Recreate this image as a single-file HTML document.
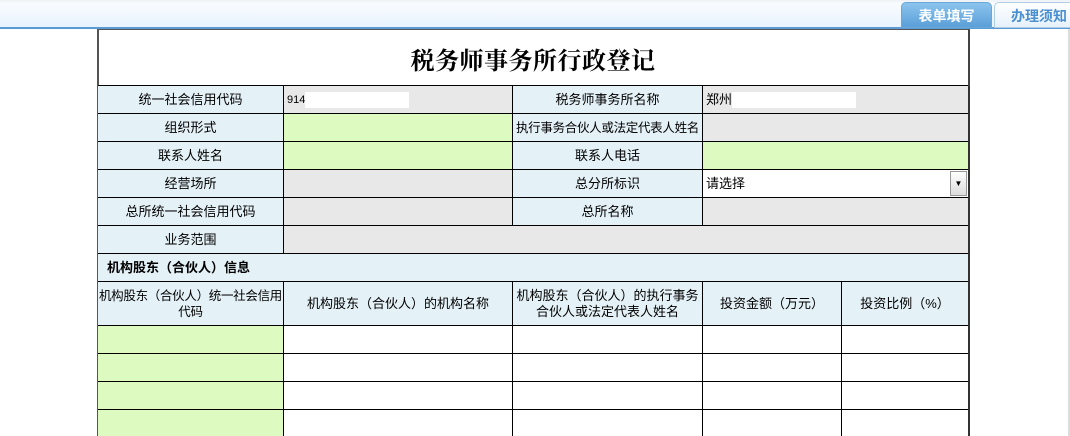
<!DOCTYPE html>
<html style="width:1070px;height:436px;overflow:hidden"><head><meta charset="utf-8"><style>
*{margin:0;padding:0;box-sizing:border-box}
body{width:1070px;height:436px;overflow:hidden;background:#fff;position:relative;font-family:"Liberation Sans","Noto Sans CJK SC","WenQuanYi Zen Hei",sans-serif;font-size:13px;color:#000}
.top{position:absolute;left:0;top:0;width:1070px;height:27px;background:linear-gradient(#eef1f4 0,#f9fcff 3px,#e8f3fd 27px)}
.line{position:absolute;left:0;top:27px;width:1070px;height:2px;background:#5b9bd5}
.tab{position:absolute;top:2px;height:26px;border-radius:5px 5px 0 0;font-weight:bold;font-size:14px;text-align:center;line-height:26px}
.t1{left:901px;width:91px;background:linear-gradient(#8cc4ee,#5a9fd8);color:#fff;border:1px solid #6aa6d8}
.t2{left:994px;width:90px;background:linear-gradient(#fff,#e6f1fb);color:#4a8fd0;border:1px solid #b0cde6}
.box{position:absolute;left:97px;top:29px;width:873px;height:407px;border-left:2px solid #555;border-right:2px solid #444;border-top:1px solid #555}
.title{position:absolute;left:98px;top:41px;width:870px;text-align:center;font-family:"Liberation Serif","Noto Serif CJK SC",serif;font-size:24px;font-weight:bold;letter-spacing:0.5px}
.c{position:absolute;border-right:1px solid #000;border-bottom:1px solid #000;display:flex;align-items:center;justify-content:center;text-align:center;line-height:16px;white-space:nowrap;overflow:hidden}
.wr{white-space:normal}
.l{background:#e4f1f7}
.g{background:#e8e8e8}
.y{background:#ddfbc0}
.w{background:#fff}
.p{justify-content:flex-start;padding-left:3px}
</style></head><body>
<div class="top"></div><div class="line"></div>
<div class="tab t1">表单填写</div><div class="tab t2">办理须知</div>
<div class="box"></div>
<div class="title">税务师事务所行政登记</div>
<div style="position:absolute;left:98px;top:85px;width:870px;height:1px;background:#000"></div>
<div class="c l" style="left:98px;top:86px;width:186px;height:28px">统一社会信用代码</div>
<div class="c g p" style="left:284px;top:86px;width:229px;height:28px;font-size:11px">914<span style="display:inline-block;width:104px;height:16px;background:#fff"></span></div>
<div class="c l" style="left:513px;top:86px;width:190px;height:28px">税务师事务所名称</div>
<div class="c g p" style="left:703px;top:86px;width:266px;height:28px">郑州<span style="display:inline-block;width:124px;height:16px;background:#fff"></span></div>

<div class="c l" style="left:98px;top:114px;width:186px;height:28px">组织形式</div>
<div class="c y" style="left:284px;top:114px;width:229px;height:28px"></div>
<div class="c l" style="left:513px;top:114px;width:190px;height:28px;font-size:12.5px;letter-spacing:-0.3px">执行事务合伙人或法定代表人姓名</div>
<div class="c g" style="left:703px;top:114px;width:266px;height:28px"></div>

<div class="c l" style="left:98px;top:142px;width:186px;height:28px">联系人姓名</div>
<div class="c y" style="left:284px;top:142px;width:229px;height:28px"></div>
<div class="c l" style="left:513px;top:142px;width:190px;height:28px">联系人电话</div>
<div class="c y" style="left:703px;top:142px;width:266px;height:28px"></div>

<div class="c l" style="left:98px;top:170px;width:186px;height:28px">经营场所</div>
<div class="c g" style="left:284px;top:170px;width:229px;height:28px"></div>
<div class="c l" style="left:513px;top:170px;width:190px;height:28px">总分所标识</div>
<div class="c w p" style="left:703px;top:170px;width:266px;height:28px">请选择
<span style="position:absolute;right:1px;top:1px;width:17px;height:25px;background:linear-gradient(#fff,#ddd);border:1px solid #999;font-size:8px;line-height:23px;text-align:center">▼</span></div>

<div class="c l" style="left:98px;top:198px;width:186px;height:28px">总所统一社会信用代码</div>
<div class="c g" style="left:284px;top:198px;width:229px;height:28px"></div>
<div class="c l" style="left:513px;top:198px;width:190px;height:28px">总所名称</div>
<div class="c g" style="left:703px;top:198px;width:266px;height:28px"></div>

<div class="c l" style="left:98px;top:226px;width:186px;height:28px">业务范围</div>
<div class="c g" style="left:284px;top:226px;width:685px;height:28px"></div>

<div class="c l p" style="left:98px;top:254px;width:871px;height:28px;font-weight:bold;padding-left:9px">机构股东（合伙人）信息</div>

<div class="c l wr" style="left:98px;top:282px;width:186px;height:44px;font-size:12.5px;letter-spacing:-0.3px">机构股东（合伙人）统一社会信用代码</div>
<div class="c l" style="left:284px;top:282px;width:229px;height:44px">机构股东（合伙人）的机构名称</div>
<div class="c l wr" style="left:513px;top:282px;width:190px;height:44px;padding:0 2px">机构股东（合伙人）的执行事务合伙人或法定代表人姓名</div>
<div class="c l" style="left:703px;top:282px;width:139px;height:44px">投资金额（万元）</div>
<div class="c l" style="left:842px;top:282px;width:127px;height:44px">投资比例（%）</div>

<div class="c y" style="left:98px;top:326px;width:186px;height:28px"></div><div class="c w" style="left:284px;top:326px;width:229px;height:28px"></div><div class="c w" style="left:513px;top:326px;width:190px;height:28px"></div><div class="c w" style="left:703px;top:326px;width:139px;height:28px"></div><div class="c w" style="left:842px;top:326px;width:127px;height:28px"></div>
<div class="c y" style="left:98px;top:354px;width:186px;height:28px"></div><div class="c w" style="left:284px;top:354px;width:229px;height:28px"></div><div class="c w" style="left:513px;top:354px;width:190px;height:28px"></div><div class="c w" style="left:703px;top:354px;width:139px;height:28px"></div><div class="c w" style="left:842px;top:354px;width:127px;height:28px"></div>
<div class="c y" style="left:98px;top:382px;width:186px;height:28px"></div><div class="c w" style="left:284px;top:382px;width:229px;height:28px"></div><div class="c w" style="left:513px;top:382px;width:190px;height:28px"></div><div class="c w" style="left:703px;top:382px;width:139px;height:28px"></div><div class="c w" style="left:842px;top:382px;width:127px;height:28px"></div>
<div class="c y" style="left:98px;top:410px;width:186px;height:26px;border-bottom:0"></div><div class="c w" style="left:284px;top:410px;width:229px;height:26px;border-bottom:0"></div><div class="c w" style="left:513px;top:410px;width:190px;height:26px;border-bottom:0"></div><div class="c w" style="left:703px;top:410px;width:139px;height:26px;border-bottom:0"></div><div class="c w" style="left:842px;top:410px;width:127px;height:26px;border-bottom:0"></div>
<div style="position:absolute;left:968px;top:86px;width:2px;height:350px;background:#333"></div>
<div style="position:absolute;left:1068px;top:29px;width:2px;height:407px;background:#ddd"></div>
</body></html>
